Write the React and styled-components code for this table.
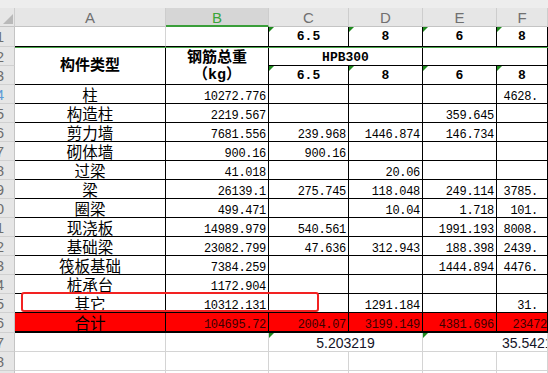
import React from 'react';
import styled, { createGlobalStyle } from 'styled-components';

const GlobalStyle = createGlobalStyle`
  html, body {
    margin: 0;
    padding: 0;
    background: #ffffff;
  }
  body {
    font-family: 'Liberation Mono', 'Noto Sans CJK SC', monospace;
  }
`;

const Sheet = styled.div`
  position: relative;
  width: 548px;
  height: 373px;
  overflow: hidden;
  display: grid;
  grid-template-columns: 15px 151px 103px 80px 74px 74px 51px;
  grid-template-rows: 8px 19px 20px 19px 19px repeat(12, 19px) 20px 19px 19px 19px;
  background: #ffffff;
`;

const TopStrip = styled.div`
  grid-column: 1 / -1;
  background: #ededed;
`;

const Corner = styled.div`
  background: #e6e6e6;
  border-right: 1px solid #cdcdcd;
  border-bottom: 1px solid #c4c4c4;
  box-sizing: border-box;
  display: flex;
  align-items: flex-end;
  justify-content: flex-end;
  padding: 0 1px 2px 0;

  svg {
    display: block;
  }
`;

const ColHead = styled.div`
  box-sizing: border-box;
  background: ${(p) => (p.$active ? '#d6d6d6' : '#e6e6e6')};
  color: ${(p) => (p.$active ? '#3aa53a' : '#707070')};
  border-right: 1px solid #cdcdcd;
  border-bottom: ${(p) => (p.$active ? '2px solid #3a9e3a' : '1px solid #c4c4c4')};
  display: flex;
  align-items: center;
  justify-content: center;
  font-family: 'Liberation Sans', Arial, sans-serif;
  font-size: 15px;
  line-height: 15px;
  padding-top: ${(p) => (p.$active ? '2px' : '1px')};
`;

const RowHead = styled.div`
  box-sizing: border-box;
  background: #e6e6e6;
  border-right: 1px solid #c4c4c4;
  border-bottom: 1px solid #d0d0d0;
  overflow: hidden;
  display: flex;
  align-items: center;
  font-family: 'Liberation Sans', Arial, sans-serif;
  font-size: 15px;
  color: ${(p) => (p.$hl ? '#5d9ad6' : '#6e6e6e')};
`;

const RowNum = styled.span`
  flex: none;
  width: 40px;
  margin-left: -36px;
  text-align: right;
`;

const justify = { left: 'flex-start', center: 'center', right: 'flex-end' };

const Cell = styled.div`
  position: relative;
  box-sizing: border-box;
  grid-column: span ${(p) => p.$span || 1};
  grid-row: span ${(p) => p.$rows || 1};
  background: ${(p) => p.$bg || '#ffffff'};
  border-right: 1px solid ${(p) => p.$rline || p.$line || '#000'};
  border-bottom: ${(p) => (p.$thick ? 2 : 1)}px solid ${(p) => p.$line || '#000'};
  display: flex;
  flex-direction: ${(p) => (p.$stack ? 'column' : 'row')};
  align-items: ${(p) => (p.$stack ? 'center' : p.$middle ? 'center' : 'flex-end')};
  justify-content: ${(p) => (p.$stack ? 'center' : justify[p.$align || 'right'])};
  padding: 0 ${(p) => p.$pr ?? 2}px 0 ${(p) => p.$pl ?? 2}px;
  white-space: nowrap;
  overflow: hidden;

  &::before {
    content: '';
    display: ${(p) => (p.$flag ? 'block' : 'none')};
    position: absolute;
    top: 0;
    left: 0;
    border-top: 5px solid #1f8a1f;
    border-right: 5px solid transparent;
  }
`;

const Num = styled.span`
  font-family: 'Liberation Mono', 'DejaVu Sans Mono', monospace;
  font-size: 12px;
  letter-spacing: -0.3px;
  line-height: 11px;
  color: ${(p) => p.$color || '#000'};
`;

const Han = styled.span`
  font-family: 'Noto Sans CJK SC', sans-serif;
  font-size: 15.5px;
  line-height: 17px;
  color: #000;
`;

const HeadText = styled.span`
  font-family: 'Liberation Mono', 'Noto Sans CJK SC', monospace;
  font-weight: 700;
  font-size: ${(p) => (p.$han ? 15 : 13)}px;
  line-height: 17px;
  color: #000;
  padding-top: ${(p) => p.$dy || 0}px;
`;

const Calc = styled.span`
  font-family: 'Liberation Sans', Arial, sans-serif;
  font-size: 14px;
  line-height: 16px;
  color: #141428;
`;

const FreezeLine = styled.div`
  position: absolute;
  left: 15px;
  right: 0;
  top: 47px;
  height: 1px;
  background: #4aa84a;
`;

const Highlight = styled.div`
  position: absolute;
  left: 21px;
  top: 292px;
  width: 298px;
  height: 20px;
  box-sizing: border-box;
  border: 2.5px solid #f22222;
  border-radius: 3px;
  pointer-events: none;
`;

const GRID = '#d4d4d4';

const rows = [
  ['柱', '10272.776', '', '', '', '4628.'],
  ['构造柱', '2219.567', '', '', '359.645', ''],
  ['剪力墙', '7681.556', '239.968', '1446.874', '146.734', ''],
  ['砌体墙', '900.16', '900.16', '', '', ''],
  ['过梁', '41.018', '', '20.06', '', ''],
  ['梁', '26139.1', '275.745', '118.048', '249.114', '3785.'],
  ['圈梁', '499.471', '', '10.04', '1.718', '101.'],
  ['现浇板', '14989.979', '540.561', '', '1991.193', '8008.'],
  ['基础梁', '23082.799', '47.636', '312.943', '188.398', '2439.'],
  ['筏板基础', '7384.259', '', '', '1444.894', '4476.'],
  ['桩承台', '1172.904', '', '', '', ''],
  ['其它', '10312.131', '', '1291.184', '', '31.'],
];

const total = ['合计', '104695.72', '2004.07', '3199.149', '4381.696', '23472'];

const diameters = ['6.5', '8', '6', '8'];

const Diameters = () =>
  diameters.map((d, i) => (
    <Cell key={i} $align="center" $middle $flag>
      <HeadText>{d}</HeadText>
    </Cell>
  ));

const DataRow = ({ values, n, red }) => (
  <>
    <RowHead $hl={n === 4}>
      <RowNum>{n}</RowNum>
    </RowHead>
    <Cell $align="center" $bg={red ? '#ff0000' : undefined} $thick={red}>
      <Han>{values[0]}</Han>
    </Cell>
    {values.slice(1).map((v, i) => (
      <Cell
        key={i}
        $bg={red ? '#ff0000' : undefined}
        $thick={red}
        $pr={i === 4 ? (red ? 0 : 9) : 2}
      >
        <Num $color={red ? '#3c0000' : undefined}>{v}</Num>
      </Cell>
    ))}
  </>
);

export default function App() {
  return (
    <>
      <GlobalStyle />
      <Sheet>
        <TopStrip />

        <Corner>
          <svg width="10" height="10" viewBox="0 0 10 10">
            <path d="M10 0 L10 10 L0 10 Z" fill="#b9b9b9" />
          </svg>
        </Corner>
        {['A', 'B', 'C', 'D', 'E', 'F'].map((c) => (
          <ColHead key={c} $active={c === 'B'}>
            {c}
          </ColHead>
        ))}

        <RowHead>
          <RowNum>1</RowNum>
        </RowHead>
        <Cell $rline={GRID} />
        <Cell />
        <Diameters />

        <RowHead>
          <RowNum>2</RowNum>
        </RowHead>
        <Cell $rows={2} $align="center" $middle>
          <HeadText $han $dy={2}>构件类型</HeadText>
        </Cell>
        <Cell $rows={2} $stack>
          <HeadText $han $dy={3}>钢筋总重</HeadText>
          <HeadText $han>（kg）</HeadText>
        </Cell>
        <Cell $span={2} $align="center" $middle>
          <HeadText $dy={2}>HPB300</HeadText>
        </Cell>
        <Cell $span={2} />

        <RowHead>
          <RowNum>3</RowNum>
        </RowHead>
        <Diameters />

        {rows.map((r, i) => (
          <DataRow key={i} values={r} n={i + 4} />
        ))}
        <DataRow values={total} n={16} red />

        <RowHead>
          <RowNum>17</RowNum>
        </RowHead>
        <Cell $line={GRID} />
        <Cell $line={GRID} />
        <Cell $line={GRID} $span={2} $align="center" $flag>
          <Calc>5.203219</Calc>
        </Cell>
        <Cell $line={GRID} $span={2} $align="left" $pl={79} $pr={0} $flag>
          <Calc>35.54217</Calc>
        </Cell>

        {[18, 19].map((n) => (
          <React.Fragment key={n}>
            <RowHead>
              <RowNum>{n}</RowNum>
            </RowHead>
            {[0, 1, 2, 3, 4, 5].map((c) => (
              <Cell key={c} $line={GRID} />
            ))}
          </React.Fragment>
        ))}

        <FreezeLine />
        <Highlight />
      </Sheet>
    </>
  );
}
